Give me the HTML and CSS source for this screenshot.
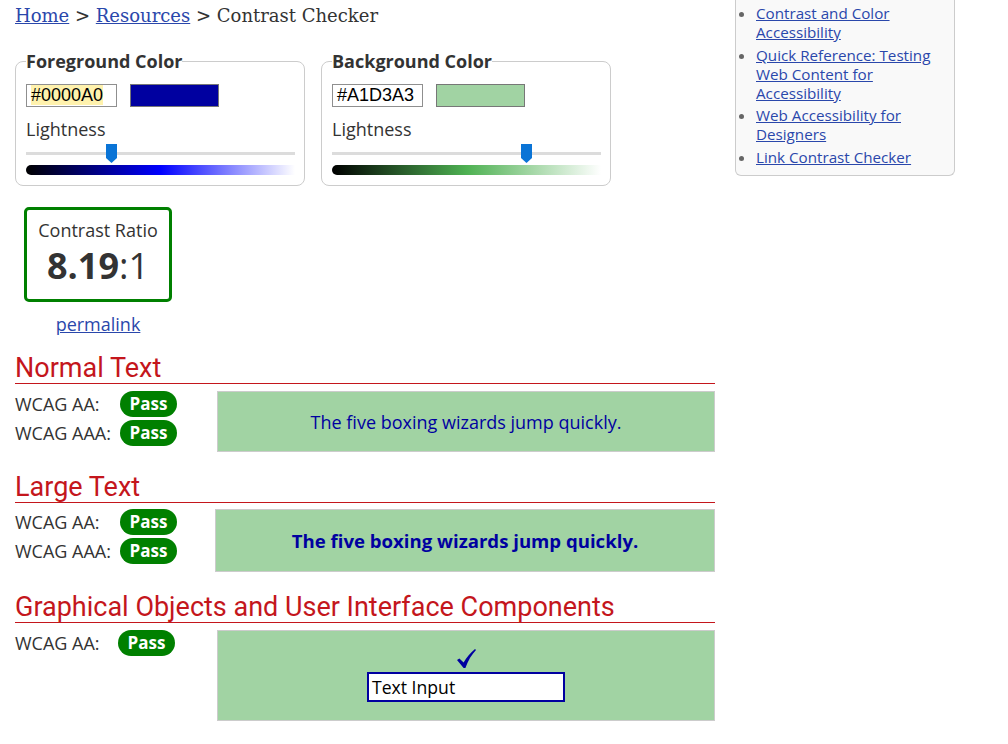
FILE: index.html
```html
<!DOCTYPE html>
<html lang="en">
<head>
<meta charset="utf-8">
<title>Contrast Checker</title>
<link rel="stylesheet" href="styles.css">
</head>
<body>
<div class="page">
  <main class="main">
    <nav class="crumbs"><a href="#">Home</a> &gt; <a href="#">Resources</a> &gt; Contrast Checker</nav>

    <div class="pickers">
      <fieldset class="picker">
        <legend>Foreground Color</legend>
        <div class="color-row">
          <div class="hex"><span class="hex-sel">#0000A0</span></div>
          <div class="swatch swatch-fg"></div>
        </div>
        <div class="light-label">Lightness</div>
        <div class="slider">
          <div class="track"></div>
          <svg class="thumb" style="left:80px" width="11" height="19" viewBox="0 0 11 19"><path d="M0 0H11V14L5.5 19L0 14Z" fill="#0a74d6"/></svg>
        </div>
        <div class="grad grad-fg"></div>
      </fieldset>

      <fieldset class="picker">
        <legend>Background Color</legend>
        <div class="color-row">
          <div class="hex">#A1D3A3</div>
          <div class="swatch swatch-bg"></div>
        </div>
        <div class="light-label">Lightness</div>
        <div class="slider">
          <div class="track"></div>
          <svg class="thumb" style="left:189px" width="11" height="19" viewBox="0 0 11 19"><path d="M0 0H11V14L5.5 19L0 14Z" fill="#0a74d6"/></svg>
        </div>
        <div class="grad grad-bg"></div>
      </fieldset>
    </div>

    <div class="ratio-wrap">
      <div class="ratio-box">
        <div class="ratio-label">Contrast Ratio</div>
        <div class="ratio-value"><b>8.19</b>:1</div>
      </div>
      <a class="permalink" href="#">permalink</a>
    </div>

    <section class="result result-first">
      <h2>Normal Text</h2>
      <div class="result-body">
        <div class="levels">
          <div class="level"><span class="level-name">WCAG AA:</span><span class="pass">Pass</span></div>
          <div class="level"><span class="level-name">WCAG AAA:</span><span class="pass">Pass</span></div>
        </div>
        <div class="sample sample-normal">The five boxing wizards jump quickly.</div>
      </div>
    </section>

    <section class="result">
      <h2>Large Text</h2>
      <div class="result-body result-body-tight">
        <div class="levels levels-large">
          <div class="level"><span class="level-name">WCAG AA:</span><span class="pass">Pass</span></div>
          <div class="level"><span class="level-name">WCAG AAA:</span><span class="pass">Pass</span></div>
        </div>
        <div class="sample sample-large">The five boxing wizards jump quickly.</div>
      </div>
    </section>

    <section class="result">
      <h2>Graphical Objects and User Interface Components</h2>
      <div class="result-body">
        <div class="levels">
          <div class="level"><span class="level-name level-name-ui">WCAG AA:</span><span class="pass">Pass</span></div>
        </div>
        <div class="sample sample-ui">
          <svg class="check" width="19" height="19" viewBox="0 0 19 19"><path d="M0 11L2.4 9.4L6.6 13.4C9.5 8.6 13.5 3.6 18 0L19 1C14.8 5.4 11 11.6 8.4 19H6.6Z" fill="#0000a0"/></svg>
          <div class="text-input">Text Input</div>
        </div>
      </div>
    </section>

    <section class="result">
      <h2>Explanation</h2>
    </section>
  </main>

  <aside class="sidebar">
    <ul class="links">
      <li><a href="#">Contrast and Color Accessibility</a></li>
      <li><a href="#">Quick Reference: Testing Web Content for Accessibility</a></li>
      <li><a href="#">Web Accessibility for Designers</a></li>
      <li><a href="#">Link Contrast Checker</a></li>
    </ul>
  </aside>
</div>
</body>
</html>
```

FILE: styles.css
```css
body {
  margin: 0;
  font-family: "Open Sans", "Noto Sans", sans-serif;
  color: #333;
  background: #fff;
}

a {
  color: #2a47ab;
}

.page {
  display: flex;
  align-items: flex-start;
}

.main {
  width: 700px;
  margin-left: 15px;
  flex: none;
}

/* breadcrumb */
.crumbs {
  font-family: "DejaVu Serif", serif;
  font-size: 18px;
  line-height: 28px;
  height: 28px;
  padding-top: 2px;
  color: #333;
}

/* color pickers */
.pickers {
  display: flex;
  gap: 16px;
  margin-top: 19px;
}

.picker {
  margin: 0;
  width: 290px;
  box-sizing: border-box;
  border: 1px solid #ccc;
  border-radius: 8px;
  padding: 11px 9px 10px 10px;
  min-inline-size: 0;
}

.picker legend {
  padding: 0;
  font-weight: 700;
  font-size: 18px;
  line-height: 24px;
  color: #333;
}

.color-row {
  display: flex;
  gap: 13px;
  height: 23px;
}

.hex {
  width: 91px;
  height: 23px;
  box-sizing: border-box;
  border: 1px solid #8f8f8f;
  padding-left: 4px;
  font-family: "Liberation Sans", Arial, sans-serif;
  font-size: 18px;
  line-height: 21px;
  color: #000;
  background: #fff;
  overflow: hidden;
}

.hex-sel {
  background: #fff2ad;
}

.swatch {
  width: 89px;
  height: 23px;
  box-sizing: border-box;
  border: 1px solid #777;
}

.swatch-fg {
  background: #0000a0;
}

.swatch-bg {
  background: #a1d3a3;
}

.light-label {
  font-size: 18px;
  line-height: 24px;
  margin-top: 10px;
}

.slider {
  position: relative;
  height: 21px;
  margin-top: 3px;
}

.track {
  position: absolute;
  left: 0;
  right: 0;
  top: 8px;
  height: 3px;
  background: #dcdcdc;
}

.thumb {
  position: absolute;
  top: 0;
  display: block;
}

.grad {
  height: 10px;
  border-radius: 5px 0 0 5px;
}

.grad-fg {
  background: linear-gradient(to right, #000 0%, #0000ff 50%, #fff 100%);
}

.grad-bg {
  background: linear-gradient(to right, #000 0%, #4eb152 50%, #fff 100%);
}

/* contrast ratio */
.ratio-wrap {
  width: 148px;
  margin-top: 21px;
  margin-left: 9px;
}

.ratio-box {
  border: 3px solid #008000;
  border-radius: 5px;
  padding: 8px 0 11px;
  text-align: center;
}

.ratio-label {
  font-size: 18px;
  line-height: 24px;
}

.ratio-value {
  font-size: 36px;
  line-height: 44px;
  margin-top: 2px;
  font-weight: 400;
}

.ratio-value b {
  font-weight: 700;
}

.permalink {
  display: block;
  text-align: center;
  font-size: 18px;
  line-height: 24px;
  margin-top: 10px;
}

/* results */
.result {
  margin-top: 20px;
}

.result-first {
  margin-top: 17px;
}

.result h2 {
  margin: 0;
  font-family: Roboto, "Liberation Sans", sans-serif;
  font-weight: 400;
  font-size: 27px;
  line-height: 30px;
  color: #c4161c;
  border-bottom: 1px solid #c4161c;
}

.result-body {
  display: flex;
  margin-top: 7px;
}

.result-body-tight {
  margin-top: 6px;
}

.levels {
  width: 202px;
  flex: none;
  display: flex;
  flex-direction: column;
  gap: 3px;
}

.levels-large {
  width: 200px;
}

.level {
  display: flex;
  align-items: center;
  height: 26px;
}

.level-name {
  width: 105px;
  flex: none;
  font-size: 18px;
  line-height: 26px;
}

.level-name-ui {
  width: 103px;
}

.pass {
  background: #008000;
  color: #fff;
  font-weight: 700;
  font-size: 17px;
  line-height: 26px;
  padding: 0 9.5px;
  border-radius: 13px;
}

.sample {
  flex: 1;
  box-sizing: border-box;
  border: 1px solid #ccc;
  background: #a1d3a3;
  color: #0000a0;
  display: flex;
  align-items: center;
  justify-content: center;
}

.sample-normal {
  height: 61px;
  font-size: 18px;
  line-height: 24px;
}

.sample-large {
  height: 63px;
  font-size: 18.6px;
  line-height: 26px;
  font-weight: 700;
}

.sample-ui {
  height: 91px;
  flex-direction: column;
  gap: 4px;
}

.check {
  display: block;
}

.text-input {
  width: 198px;
  height: 30px;
  box-sizing: border-box;
  border: 2px solid #0000a0;
  background: #fff;
  color: #000;
  padding-left: 3px;
  font-size: 17.6px;
  line-height: 26px;
}

/* sidebar */
.sidebar {
  width: 220px;
  margin-left: 20px;
  flex: none;
  box-sizing: border-box;
  background: #f9f9f9;
  border: 1px solid #ccc;
  border-top: none;
  border-radius: 0 0 6px 6px;
}

.links {
  margin: 0;
  padding: 4px 9px 8px 20px;
  list-style: disc;
  font-size: 15.2px;
  line-height: 19px;
}

.links li::marker {
  color: #666;
}

.links li + li {
  margin-top: 3.6px;
}
```
